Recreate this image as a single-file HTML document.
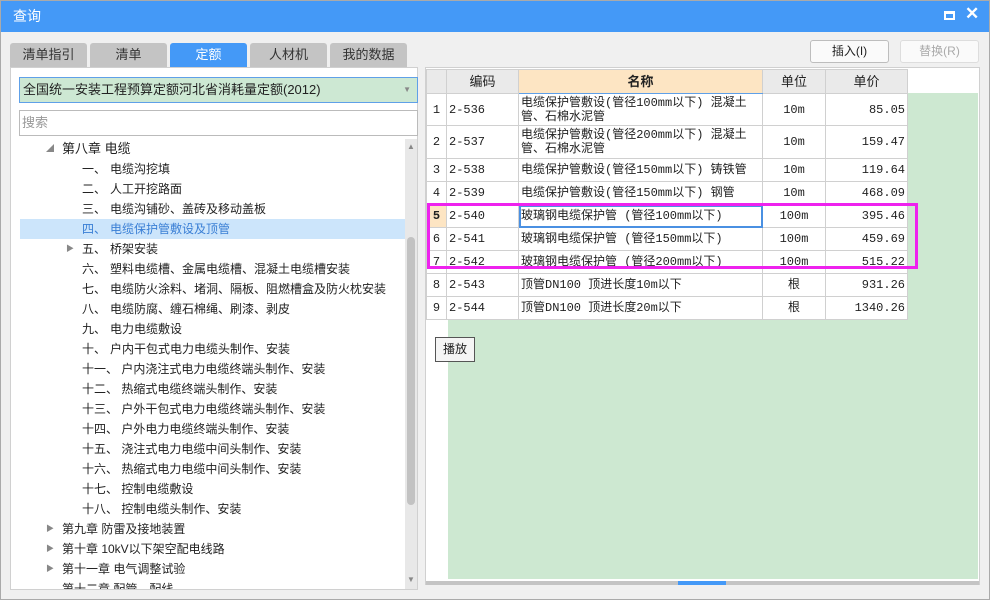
<!DOCTYPE html>
<html><head><meta charset="utf-8"><style>
*{box-sizing:border-box;margin:0;padding:0}
body{width:990px;height:600px;overflow:hidden;background:#f0f0f0;font-family:"Liberation Sans","Noto Sans CJK SC",sans-serif;font-size:12px;color:#222;position:relative}
.a{position:absolute}
.title{left:0;top:0;width:990px;height:32px;background:#4499f7;color:#fff;font-size:14px;line-height:32px;padding-left:13px}
.tab{top:43px;height:24px;width:77px;background:#c4c4c4;border-radius:3px 3px 0 0;text-align:center;line-height:24px;font-size:13px;color:#333}
.tab.on{background:#4499f7;color:#fff}
.btn{top:40px;width:79px;height:23px;border:1px solid #bdbdbd;border-radius:3px;background:#fafafa;text-align:center;line-height:21px;font-size:12px}
.tree div{position:absolute;height:20px;line-height:20px;font-size:12px;white-space:nowrap}
.tree span{position:absolute;left:28px}
table{border-collapse:collapse;font-family:"Liberation Mono","Noto Sans CJK SC",monospace;font-size:12px}
td{border:1px solid #d0d0d0;padding:0 2px;line-height:14px}
td:first-child{text-align:center}
</style></head><body>
<div class="a title">查询</div>
<div class="a" style="left:944px;top:11px;width:11px;height:9px;border:2px solid #fff;border-top-width:3px"></div>
<div class="a" style="left:965px;top:4px;color:#fff;font-size:17px;font-weight:bold">✕</div>
<div class="a tab" style="left:10px">清单指引</div>
<div class="a tab" style="left:90px">清单</div>
<div class="a tab on" style="left:170px">定额</div>
<div class="a tab" style="left:250px">人材机</div>
<div class="a tab" style="left:330px">我的数据</div>
<div class="a btn" style="left:810px">插入(I)</div>
<div class="a btn" style="left:900px;color:#aaa;border-color:#ddd">替换(R)</div>

<div class="a" style="left:10px;top:67px;width:408px;height:523px;background:#fff;border:1px solid #d0d0d0"></div>
<div class="a" style="left:19px;top:77px;width:399px;height:26px;background:#cde8d3;border:1px solid #5fa0e8;line-height:24px;padding-left:3px;font-size:13px">全国统一安装工程预算定额河北省消耗量定额(2012)<span style="position:absolute;right:6px;color:#888;font-size:8px">▼</span></div>
<div class="a" style="left:19px;top:110px;width:399px;height:26px;background:#fff;border:1px solid #bbb;line-height:24px;padding-left:2px;color:#999;font-size:13px">搜索</div>
<div class="a" style="left:20px;top:219px;width:385px;height:20px;background:#cce5fb"></div>
<div class="tree">
<div style="left:46px;top:139px;color:#888;font-size:8px">◢</div><div style="left:62px;top:139px;font-size:13px">第八章 电缆</div>
<div style="left:82px;top:159px">一、<span>电缆沟挖填</span></div>
<div style="left:82px;top:179px">二、<span>人工开挖路面</span></div>
<div style="left:82px;top:199px">三、<span>电缆沟铺砂、盖砖及移动盖板</span></div>
<div style="left:82px;top:219px;color:#3a7fd5">四、<span>电缆保护管敷设及顶管</span></div>
<div style="left:66px;top:239px;color:#888;font-size:8px">▶</div><div style="left:82px;top:239px">五、<span>桥架安装</span></div>
<div style="left:82px;top:259px">六、<span>塑料电缆槽、金属电缆槽、混凝土电缆槽安装</span></div>
<div style="left:82px;top:279px">七、<span>电缆防火涂料、堵洞、隔板、阻燃槽盒及防火枕安装</span></div>
<div style="left:82px;top:299px">八、<span>电缆防腐、缠石棉绳、刷漆、剥皮</span></div>
<div style="left:82px;top:319px">九、<span>电力电缆敷设</span></div>
<div style="left:82px;top:339px">十、<span>户内干包式电力电缆头制作、安装</span></div>
<div style="left:82px;top:359px">十一、&nbsp;户内浇注式电力电缆终端头制作、安装</div>
<div style="left:82px;top:379px">十二、&nbsp;热缩式电缆终端头制作、安装</div>
<div style="left:82px;top:399px">十三、&nbsp;户外干包式电力电缆终端头制作、安装</div>
<div style="left:82px;top:419px">十四、&nbsp;户外电力电缆终端头制作、安装</div>
<div style="left:82px;top:439px">十五、&nbsp;浇注式电力电缆中间头制作、安装</div>
<div style="left:82px;top:459px">十六、&nbsp;热缩式电力电缆中间头制作、安装</div>
<div style="left:82px;top:479px">十七、&nbsp;控制电缆敷设</div>
<div style="left:82px;top:499px">十八、&nbsp;控制电缆头制作、安装</div>
<div style="left:46px;top:519px;color:#888;font-size:8px">▶</div><div style="left:62px;top:519px">第九章 防雷及接地装置</div>
<div style="left:46px;top:539px;color:#888;font-size:8px">▶</div><div style="left:62px;top:539px">第十章 10kV以下架空配电线路</div>
<div style="left:46px;top:559px;color:#888;font-size:8px">▶</div><div style="left:62px;top:559px">第十一章 电气调整试验</div>
<div style="left:62px;top:579px;height:10px;overflow:hidden">第十二章 配管、配线</div>
</div>
<div class="a" style="left:405px;top:139px;width:12px;height:450px;background:#e8e8e8"></div>
<div class="a" style="left:407px;top:237px;width:8px;height:268px;background:#c2c2c2;border-radius:4px"></div>
<div class="a" style="left:407px;top:142px;color:#888;font-size:8px">▲</div>
<div class="a" style="left:407px;top:575px;color:#888;font-size:8px">▼</div>

<div class="a" style="left:425px;top:67px;width:555px;height:518px;background:#fff;border:1px solid #d0d0d0"></div>
<div class="a" style="left:448px;top:93px;width:530px;height:486px;background:#cde8d1"></div>
<table class="a" style="left:426px;top:69px;background:#fff">
<tr style="height:24px;background:#eaeaea;font-family:'Liberation Sans','Noto Sans CJK SC',sans-serif;font-size:13px;text-align:center"><td style="width:20px"></td><td style="width:72px">编码</td><td style="width:244px;background:#fde5c3;font-weight:bold;border-bottom:1px solid #5fa0e8">名称</td><td style="width:63px">单位</td><td style="width:82px">单价</td></tr>
<tr style="height:32px"><td>1</td><td>2-536</td><td>电缆保护管敷设(管径100mm以下) 混凝土管、石棉水泥管</td><td align=center>10m</td><td align=right>85.05</td></tr>
<tr style="height:33px"><td>2</td><td>2-537</td><td>电缆保护管敷设(管径200mm以下) 混凝土管、石棉水泥管</td><td align=center>10m</td><td align=right>159.47</td></tr>
<tr style="height:23px"><td>3</td><td>2-538</td><td>电缆保护管敷设(管径150mm以下) 铸铁管</td><td align=center>10m</td><td align=right>119.64</td></tr>
<tr style="height:23px"><td>4</td><td>2-539</td><td>电缆保护管敷设(管径150mm以下) 钢管</td><td align=center>10m</td><td align=right>468.09</td></tr>
<tr style="height:23px"><td style="background:#fde5c3;font-weight:bold">5</td><td>2-540</td><td style="outline:2px solid #4a90e2;outline-offset:-2px">玻璃钢电缆保护管 (管径100mm以下)</td><td align=center>100m</td><td align=right>395.46</td></tr>
<tr style="height:23px"><td>6</td><td>2-541</td><td>玻璃钢电缆保护管 (管径150mm以下)</td><td align=center>100m</td><td align=right>459.69</td></tr>
<tr style="height:23px"><td>7</td><td>2-542</td><td>玻璃钢电缆保护管 (管径200mm以下)</td><td align=center>100m</td><td align=right>515.22</td></tr>
<tr style="height:23px"><td>8</td><td>2-543</td><td>顶管DN100 顶进长度10m以下</td><td align=center>根</td><td align=right>931.26</td></tr>
<tr style="height:23px"><td>9</td><td>2-544</td><td>顶管DN100 顶进长度20m以下</td><td align=center>根</td><td align=right>1340.26</td></tr>
</table>
<div class="a" style="left:427px;top:203px;width:491px;height:66px;border:3px solid #ee22ee"></div>
<div class="a" style="left:435px;top:337px;width:40px;height:25px;border:1px solid #555;background:#f5f5f5;text-align:center;line-height:23px;font-size:12px">播放</div>
<div class="a" style="left:426px;top:581px;width:553px;height:4px;background:#c4c4c4"></div>
<div class="a" style="left:678px;top:581px;width:48px;height:4px;background:#4499f7"></div>
<div class="a" style="left:0;top:0;width:990px;height:600px;border:1px solid #aaa;pointer-events:none"></div>
</body></html>
